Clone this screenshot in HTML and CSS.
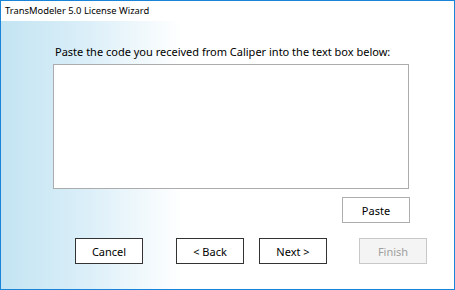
FILE: index.html
```html
<!DOCTYPE html>
<html lang="en">
<head>
  <meta charset="UTF-8">
  <title>TransModeler 5.0 License Wizard</title>
  <link rel="stylesheet" href="styles.css">
</head>
<body>
  <div class="window">
    <div class="title-bar">TransModeler 5.0 License Wizard</div>

    <div class="wizard-body">
      <div class="prompt">Paste the code you received from Caliper into the text box below:</div>
      <div class="code-box"></div>

      <div class="paste-row">
        <button class="btn">Paste</button>
      </div>

      <!-- Navigation buttons -->
      <div class="nav-row">
        <button class="btn cancel-btn">Cancel</button>
        <button class="btn back-btn">&lt; Back</button>
        <button class="btn next-btn">Next &gt;</button>
        <button class="btn finish-btn" disabled>Finish</button>
      </div>
    </div>
  </div>
</body>
</html>
```

FILE: styles.css
```css
  body {
    margin: 0; padding: 0;
    font-family: "Noto Sans", "Open Sans", sans-serif;
    font-size: 11px;
    color: #000;
  }
  .window {
    width: 455px; height: 290px;
    box-sizing: border-box;
    border: 1px solid #1a84d8;
    display: flex; flex-direction: column;
  }
  .title-bar {
    height: 20px;
    padding-left: 4px;
    line-height: 20px;
    font-size: 9.4px;
    background-color: #fff;
    white-space: nowrap;
  }
  .wizard-body {
    flex: 1;
    display: flex; flex-direction: column;
    padding: 23px 0 0 52px;
    background: linear-gradient(to right, #c3e4f2 0px, #d9eef8 80px, #fff 180px);
  }
  .prompt {
    height: 20px;
    padding-left: 2px;
    white-space: nowrap;
  }
  .code-box {
    width: 354px; height: 123px;
    background-color: #fff;
    border: 1px solid #acacac;
  }
  .paste-row {
    display: flex; justify-content: flex-end;
    width: 357px;
    margin-top: 8px;
  }
  .btn {
    width: 68px; height: 26px;
    box-sizing: border-box;
    padding: 0;
    background-color: #fff;
    border: 1px solid #333;
    font-family: inherit; font-size: 11px;
    color: #000;
  }
  .paste-row .btn {
    border-color: #adadad;
  }
  .nav-row {
    display: flex;
    margin-top: 15px;
    padding-left: 22px;
  }
  .back-btn { margin-left: 33px; }
  .next-btn { margin-left: 15px; }
  .finish-btn {
    margin-left: 32px;
    background-color: #f4f4f4;
    border-color: #c8c8c8;
    color: #a0a0a0;
  }
```
